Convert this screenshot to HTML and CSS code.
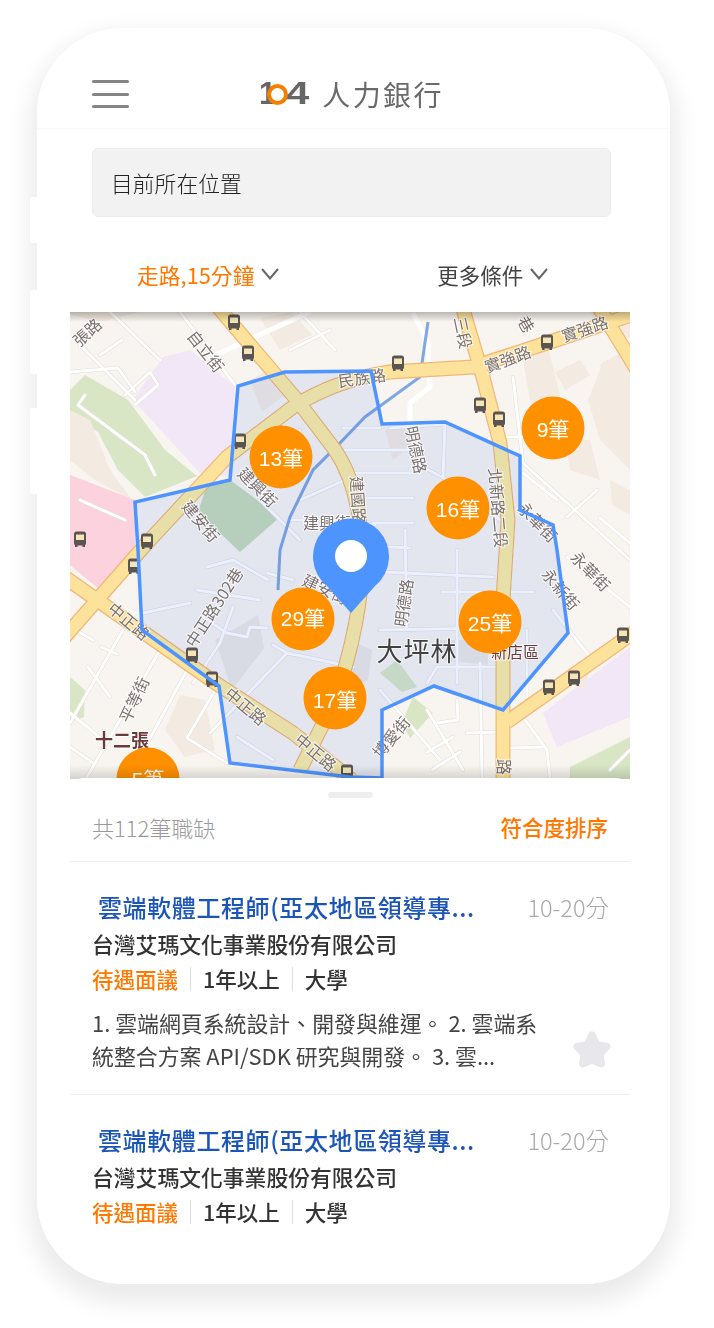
FILE: index.html
```html
<!DOCTYPE html>
<html lang="zh-Hant">
<head>
    <meta charset="UTF-8">
    <meta name="viewport" content="width=device-width, initial-scale=1.0">
    <title>104人力銀行</title>
    <link rel="stylesheet" href="styles.css">
</head>
<body>
<div class="device">
    <span class="side-btn side-btn-1"></span>
    <span class="side-btn side-btn-2"></span>
    <span class="side-btn side-btn-3"></span>

    <div class="phone">
        <header class="topbar">
            <div class="burger"><i></i><i></i><i></i></div>
            <div class="logo">
                <span class="logo-num">1</span><span class="logo-ring"></span><span class="logo-num logo-four">4</span>
                <span class="logo-name">人力銀行</span>
            </div>
        </header>

        <div class="search">目前所在位置</div>

        <div class="filters">
            <div class="filter filter-active">走路,15分鐘
                <svg class="chev" viewBox="0 0 18 12"><polyline points="1,1 9,10.5 17,1"/></svg>
            </div>
            <div class="filter">更多條件
                <svg class="chev" viewBox="0 0 18 12"><polyline points="1,1 9,10.5 17,1"/></svg>
            </div>
        </div>

        <div class="map">
            <svg class="map-svg" viewBox="70 312 560 468">
                <defs>
                    <g id="bus">
                        <rect x="-6" y="-7.500" width="12" height="14" rx="2.500" class="bus-body"/>
                        <rect x="-4" y="-4.500" width="8" height="5.500" class="bus-glass"/>
                        <rect x="-5" y="6" width="2.500" height="2" class="bus-body"/>
                        <rect x="2.500" y="6" width="2.500" height="2" class="bus-body"/>
                    </g>
                    <g id="majors">
                        <path d="M217 306 L297 400 L335 450 Q362 490 362 560 Q362 620 335 700 L300 770"/>
                        <path d="M62 640 L147 543 L227 457 L293 407 Q335 380 390 372 L473 367 L547 343 L640 312"/>
                        <path d="M462 306 L483 377 L500 443 L508 520 L503 600 L503 790"/>
                        <path d="M60 574 L143 632 L217 684 L293 733 L352 780"/>
                        <path d="M507 722 L640 628"/>
                        <path d="M598 306 L640 375"/>
                    </g>
                    <g id="minors">
                        <path d="M110 312 L160 360"/>
                        <path d="M80 345 L135 400"/>
                        <path d="M70 372 L118 368 L135 392"/>
                        <path d="M125 395 L150 372 L158 385 L135 405"/>
                        <path d="M100 355 L122 340"/>
                        <path d="M180 312 L235 385"/>
                        <path d="M300 312 L335 350"/>
                        <path d="M290 350 L330 330"/>
                        <path d="M85 395 L78 405 L145 455 L155 475"/>
                        <path d="M80 500 L125 520"/>
                        <path d="M343 428 L380 428"/>
                        <path d="M343 450 L420 450"/>
                        <path d="M340 473 L413 473"/>
                        <path d="M360 498 L413 498"/>
                        <path d="M373 523 L413 523"/>
                        <path d="M370 546 L410 548"/>
                        <path d="M445 423 L443 477"/>
                        <path d="M390 428 L445 424"/>
                        <path d="M423 467 L453 483 L500 520"/>
                        <path d="M500 437 L523 437"/>
                        <path d="M523 473 L557 500"/>
                        <path d="M597 490 L567 517"/>
                        <path d="M513 377 L523 463 L630 560"/>
                        <path d="M600 518 L630 543"/>
                        <path d="M567 557 L630 607"/>
                        <path d="M553 610 L590 657"/>
                        <path d="M527 630 L527 697"/>
                        <path d="M427 752 L453 737"/>
                        <path d="M432 770 L460 752"/>
                        <path d="M457 700 L458 720 L437 723"/>
                        <path d="M480 663 L482 777"/>
                        <path d="M467 733 L497 732"/>
                        <path d="M523 717 L547 750 L550 777"/>
                        <path d="M510 748 L543 747"/>
                        <path d="M427 710 L463 770"/>
                        <path d="M383 572 L493 577"/>
                        <path d="M457 550 L457 683"/>
                        <path d="M380 630 L493 628"/>
                        <path d="M442 592 L533 592"/>
                        <path d="M405 530 L407 630"/>
                        <path d="M427 683 L437 667 L497 667"/>
                        <path d="M267 573 L293 580"/>
                        <path d="M207 567 L233 560 L268 580"/>
                        <path d="M197 590 L260 600"/>
                        <path d="M143 613 L190 603"/>
                        <path d="M233 607 L220 643 L193 683"/>
                        <path d="M203 617 L227 633 L247 637 L250 627 L267 628"/>
                        <path d="M273 645 L287 653 L210 733"/>
                        <path d="M287 653 L353 667"/>
                        <path d="M237 737 L273 760"/>
                        <path d="M70 627 L93 640"/>
                        <path d="M101 647 L117 654"/>
                        <path d="M88 667 L110 697"/>
                        <path d="M93 607 L70 640"/>
                        <path d="M160 650 L87 777"/>
                        <path d="M123 630 L70 723"/>
                        <path d="M187 670 L133 770"/>
                        <path d="M217 687 L187 738 L227 763"/>
                        <path d="M70 713 L103 740"/>
                        <path d="M70 747 L93 763"/>
                        <path d="M290 520 L327 520 L375 525"/>
                        <path d="M380 690 L440 760"/>
                        <path d="M610 770 L630 750"/>
                        <path d="M300 430 L250 480"/>
                        <path d="M300 500 L345 480"/>
                        <path d="M260 500 L300 540"/>
                    </g>
                    <clipPath id="walk-clip">
                        <polygon points="285,372 238,386 230,480 135,502 138,550 142,630 219,686 230,763 350,777 382,778 382,710 434,686 503,710 568,633 557,550 553,525 520,510 520,456 445,422 382,424 371,371"/>
                    </clipPath>
                </defs>

                <rect class="land" x="70" y="312" width="560" height="468"/>

                <polygon class="area-pink" points="70,475 135,500 135,560 100,590 70,565"/>
                <polygon class="area-green" points="70,390 85,375 128,400 165,450 197,476 145,497 118,470 98,432 70,412"/>
                <polygon class="area-green" points="70,677 85,690 84,717 70,722"/>
                <polygon class="area-green" points="570,767 630,737 630,780 570,780"/>
                <polygon class="area-green" points="380,673 397,660 417,687 402,692"/>
                <polygon class="area-green" points="413,697 433,713 410,738 402,723"/>
                <polygon class="area-park" points="208,482 230,480 280,517 240,552 198,512"/>
                <polygon class="area-purple" points="163,357 190,350 235,387 230,477 200,473 133,400"/>
                <polygon class="area-purple" points="543,713 630,647 630,717 557,747"/>

                <g class="buildings">
                    <polygon points="555,372 580,360 590,375 565,390"/>
                    <polygon points="600,365 625,350 630,370 612,388"/>
                    <polygon points="520,345 545,335 560,395 532,410"/>
                    <polygon points="603,362 630,352 630,470 600,440 588,400"/>
                    <polygon points="565,440 590,440 600,480 570,470"/>
                    <polygon points="610,480 630,490 630,515 612,505"/>
                    <polygon points="70,410 90,420 110,470 132,500 95,480 70,460"/>
                    <polygon points="180,695 205,700 215,750 185,757 165,730"/>
                    <polygon points="100,322 60,312 140,312"/>
                    <polygon points="260,318 292,312 312,335 280,350"/>
                    <polygon points="560,680 590,665 585,690"/>
                    <polygon points="590,312 630,312 630,338 600,330"/>
                    <polygon points="250,380 268,370 285,395 262,412"/>
                    <polygon points="393,460 385,430 405,425 412,445"/>
                </g>
                <g class="buildings-gray">
                    <polygon points="350,640 372,650 368,680 345,690"/>
                    <polygon points="215,640 258,615 264,648 232,690"/>
                    <polygon points="440,640 488,640 488,665 440,660"/>
                </g>

                <use href="#minors" class="minor-casing"/>
                <use href="#minors" class="minor"/>
                <path class="minor-wide" d="M215 355 L310 312"/>
                <path class="minor-wide" d="M413 313 L428 343 L430 387 L410 403 L410 422"/>
                <path class="canal" d="M428 322 L420 377 L365 417 L340 443 L313 470 L290 517 L280 550 L278 590"/>

                <use href="#majors" class="road-casing"/>
                <use href="#majors" class="road-fill"/>

                <polygon class="walk-fill" points="285,372 238,386 230,480 135,502 138,550 142,630 219,686 230,763 350,777 382,778 382,710 434,686 503,710 568,633 557,550 553,525 520,510 520,456 445,422 382,424 371,371"/>
                <use href="#majors" class="road-inner" clip-path="url(#walk-clip)"/>

                <g class="labels">
                    <text x="88" y="338" transform="rotate(-42 88 333)">張路</text>
                    <text x="205" y="357" transform="rotate(52 205 352)">自立街</text>
                    <text x="362" y="384" transform="rotate(-8 362 378)">民族路</text>
                    <text x="462" y="338" transform="rotate(78 462 333)">三段</text>
                    <text x="508" y="365" transform="rotate(-20 508 360)">實強路</text>
                    <text x="585" y="335" transform="rotate(-18 585 330)">實強路</text>
                    <text x="525" y="330" transform="rotate(60 525 325)">巷</text>
                    <text x="257" y="493" transform="rotate(45 257 488)">建興街</text>
                    <text x="327" y="529">建興街</text>
                    <text x="200" y="527" transform="rotate(50 200 522)">建安街</text>
                    <text x="357" y="505" transform="rotate(86 357 500)">建國路</text>
                    <text x="415" y="455" transform="rotate(78 415 450)">明德路</text>
                    <text x="497" y="513" transform="rotate(85 497 508)">北新路二段</text>
                    <text x="537" y="528" transform="rotate(45 537 523)">永華街</text>
                    <text x="590" y="577" transform="rotate(45 590 572)">永華街</text>
                    <text x="560" y="595" transform="rotate(50 560 590)">永新街</text>
                    <text x="405" y="608" transform="rotate(-82 405 603)">明德路</text>
                    <text x="215" y="613" transform="rotate(-57 215 608)">中正路302巷</text>
                    <text x="128" y="627" transform="rotate(40 128 622)">中正路</text>
                    <text x="245" y="712" transform="rotate(40 245 707)">中正路</text>
                    <text x="315" y="758" transform="rotate(40 315 753)">中正路</text>
                    <text x="135" y="705" transform="rotate(-65 135 700)">平等街</text>
                    <text x="325" y="595" transform="rotate(25 325 590)">建安街</text>
                    <text x="392" y="743" transform="rotate(-50 392 738)">博愛街</text>
                    <text x="503" y="772" transform="rotate(90 503 767)">路</text>
                </g>
                <text class="place-big" x="417" y="661">大坪林</text>
                <text class="place-red" x="515" y="658">新店區</text>
                <text class="place-red place-bold" x="122" y="747">十二張</text>

                <use href="#bus" x="234" y="322"/>
                <use href="#bus" x="248" y="353"/>
                <use href="#bus" x="240" y="441"/>
                <use href="#bus" x="147" y="541"/>
                <use href="#bus" x="80" y="539"/>
                <use href="#bus" x="398" y="363"/>
                <use href="#bus" x="547" y="342"/>
                <use href="#bus" x="480" y="405"/>
                <use href="#bus" x="499" y="419"/>
                <use href="#bus" x="134" y="566"/>
                <use href="#bus" x="192" y="655"/>
                <use href="#bus" x="212" y="679"/>
                <use href="#bus" x="347" y="772"/>
                <use href="#bus" x="623" y="635"/>
                <use href="#bus" x="574" y="678"/>
                <use href="#bus" x="549" y="687"/>

                <polygon class="walk-line" points="285,372 238,386 230,480 135,502 138,550 142,630 219,686 230,763 350,777 382,778 382,710 434,686 503,710 568,633 557,550 553,525 520,510 520,456 445,422 382,424 371,371"/>

                <path class="pin" d="M351 613 L327 586 A38 38 0 1 1 375 586 Z"/>
                <circle class="pin-dot" cx="351" cy="556" r="16"/>

                <g class="clusters">
                    <circle cx="281" cy="457" r="31.500"/><text x="281" y="466">13筆</text>
                    <circle cx="553" cy="428" r="31.500"/><text x="553" y="437">9筆</text>
                    <circle cx="458" cy="508" r="31.500"/><text x="458" y="517">16筆</text>
                    <circle cx="303" cy="619" r="31.500"/><text x="303" y="626">29筆</text>
                    <circle cx="335" cy="698" r="31.500"/><text x="335" y="708">17筆</text>
                    <circle cx="490" cy="622" r="31.500"/><text x="490" y="631">25筆</text>
                    <circle cx="148" cy="779" r="31.500"/><text x="148" y="787">5筆</text>
                </g>
            </svg>
            <div class="map-fade-top"></div>
            <div class="map-fade-bottom"></div>
        </div>

        <section class="sheet">
            <div class="handle"></div>
            <div class="sheet-head">
                <span class="count">共112筆職缺</span>
                <span class="sort">符合度排序</span>
            </div>

            <article class="job">
                <div class="job-head">
                    <h3 class="job-title">雲端軟體工程師(亞太地區領導專...</h3>
                    <span class="job-time">10-20分</span>
                </div>
                <div class="job-company">台灣艾瑪文化事業股份有限公司</div>
                <div class="job-tags">
                    <span class="tag tag-salary">待遇面議</span>
                    <span class="tag">1年以上</span>
                    <span class="tag">大學</span>
                </div>
                <p class="job-desc">1. 雲端網頁系統設計、開發與維運。 2. 雲端系<br>統整合方案 API/SDK 研究與開發。 3. 雲...</p>
                <svg class="star" viewBox="0 0 40 40">
                    <path d="M20 5 L25 14.500 L35 16.500 L28 24.500 L29.500 34 L20 30 L10.500 34 L12 24.500 L5 16.500 L15 14.500 Z"/>
                </svg>
            </article>

            <article class="job">
                <div class="job-head">
                    <h3 class="job-title">雲端軟體工程師(亞太地區領導專...</h3>
                    <span class="job-time">10-20分</span>
                </div>
                <div class="job-company">台灣艾瑪文化事業股份有限公司</div>
                <div class="job-tags">
                    <span class="tag tag-salary">待遇面議</span>
                    <span class="tag">1年以上</span>
                    <span class="tag">大學</span>
                </div>
            </article>
        </section>
    </div>
</div>
</body>
</html>
```

FILE: styles.css
```css
html, body {
    margin: 0;
    background-color: #fff;
}
body {
    height: 1328px;
    overflow: hidden;
    font-family: "Noto Sans CJK TC", "Noto Sans", sans-serif;
    color: #333;
}

/* 手機外框 */
.device {
    position: relative;
    width: 633px;
    height: 1256px;
    margin: 28px 0 0 37px;
}
.side-btn {
    position: absolute;
    left: -7px;
    width: 8px;
    background-color: #fff;
    border-radius: 2px 0 0 2px;
    z-index: 1;
}
.side-btn-1 { top: 169px; height: 46px; }
.side-btn-2 { top: 262px; height: 84px; }
.side-btn-3 { top: 380px; height: 86px; }

.phone {
    position: relative;
    height: 100%;
    overflow: hidden;
    background-color: #fff;
    border-radius: 86px;
}
.device::before {
    content: "";
    position: absolute;
    inset: 0;
    border-radius: 86px;
    box-shadow: 0 12px 22px 8px rgba(0, 0, 0, 0.08);
}

/* 頂部 */
.topbar {
    display: flex;
    align-items: center;
    height: 101px;
    box-sizing: border-box;
    padding: 32px 33px 0 55px;
    border-bottom: 1px solid #fafafa;
}
.burger {
    display: flex;
    flex-direction: column;
    gap: 9.5px;
    width: 37px;
}
.burger i {
    display: block;
    height: 3px;
    border-radius: 2px;
    background-color: #858585;
}
.logo {
    display: flex;
    align-items: center;
    margin-left: 130px;
}
.logo-num {
    display: inline-block;
    font-family: "Liberation Sans", sans-serif;
    font-weight: 700;
    font-size: 31px;
    line-height: 36px;
    color: #666;
}
.logo-four {
    width: 16px;
    transform: scaleX(1.35);
    transform-origin: left center;
}
.logo-ring {
    width: 13px;
    height: 13px;
    margin: 0 -2px 0 -9px;
    border: 4.500px solid #f77f00;
    border-radius: 50%;
    z-index: 1;
}
.logo-name {
    margin-left: 20px;
    font-size: 28px;
    line-height: 36px;
    letter-spacing: 2.400px;
    color: #6a6a6a;
}

/* 搜尋框 */
.search {
    height: 67px;
    margin: 19px 59px 0 55px;
    padding-left: 18px;
    border: 1px solid #ececec;
    border-radius: 6px;
    background-color: #f2f2f2;
    font-size: 21.800px;
    font-weight: 300;
    line-height: 68px;
    color: #222;
}

.filters {
    display: grid;
    grid-template-columns: 1fr 1fr;
    height: 75px;
    margin-left: 29px;
    margin-right: 35px;
    padding-top: 20px;
}
.filter {
    display: flex;
    align-items: center;
    justify-content: center;
    gap: 7px;
    font-size: 21.500px;
    color: #444;
}
.filter-active {
    font-size: 21.800px;
    color: #ff7800;
}
.chev {
    width: 18px;
    height: 12px;
    margin-top: -1px;
}
.chev polyline {
    fill: none;
    stroke: #666;
    stroke-width: 2;
}

/* 地圖 */
.map {
    position: relative;
    height: 467px;
    margin: 0 40px 0 33px;
    overflow: hidden;
}
.map-svg {
    display: block;
    width: 560px;
    height: 468px;
}
.land { fill: #f8f4ef; }
.area-pink { fill: #fbd2de; }
.area-green { fill: #d8e6c6; }
.area-park { fill: #c6dcbc; }
.area-purple { fill: #f1e7f6; }
.buildings polygon { fill: #f3ebe2; }
.buildings-gray polygon { fill: #ece8e4; }
.minor-casing, .minor {
    fill: none;
    stroke-linecap: round;
    stroke-linejoin: round;
}
.minor-casing {
    stroke: #e2ded8;
    stroke-width: 4;
}
.minor {
    stroke: #fff;
    stroke-width: 3;
}
.minor-wide {
    fill: none;
    stroke: #fff;
    stroke-width: 5;
}
.canal {
    fill: none;
    stroke: #7fa8e2;
    stroke-width: 3;
}
.road-casing, .road-fill, .road-inner {
    fill: none;
    stroke-linejoin: round;
}
.road-casing {
    stroke: #f0b878;
    stroke-width: 15;
}
.road-fill {
    stroke: #fde29c;
    stroke-width: 12.500;
}
.road-inner {
    stroke: #e8dfa8;
    stroke-width: 12.500;
}
.walk-fill {
    fill: #eaf0ff;
    mix-blend-mode: multiply;
}
.walk-line {
    fill: none;
    stroke: #4d94ff;
    stroke-width: 3.500;
    stroke-linejoin: miter;
}
.labels text {
    font-size: 16px;
    text-anchor: middle;
    fill: #7b7070;
    stroke: rgba(255, 255, 255, 0.8);
    stroke-width: 2;
    paint-order: stroke;
}
.place-big {
    font-size: 26px;
    letter-spacing: 1px;
    text-anchor: middle;
    fill: #404040;
    stroke: rgba(255, 255, 255, 0.7);
    stroke-width: 2;
    paint-order: stroke;
}
.place-red {
    font-size: 16px;
    text-anchor: middle;
    fill: #6b3b3b;
    stroke: rgba(255, 255, 255, 0.8);
    stroke-width: 2;
    paint-order: stroke;
}
.place-bold {
    font-size: 18px;
    font-weight: 700;
}
.bus-body { fill: #5b5552; }
.bus-glass { fill: #f5e6b8; }
.pin { fill: #4d94ff; }
.pin-dot { fill: #fff; }
.clusters circle { fill: #ff9000; }
.clusters text {
    font-family: "Liberation Sans", "Noto Sans CJK TC", sans-serif;
    font-size: 21px;
    text-anchor: middle;
    fill: #fff;
}
.map-fade-top {
    position: absolute;
    top: 0;
    left: 0;
    right: 0;
    height: 10px;
    background: linear-gradient(rgba(0, 0, 0, 0.25), rgba(0, 0, 0, 0));
}
.map-fade-bottom {
    position: absolute;
    bottom: 0;
    left: 0;
    right: 0;
    height: 14px;
    background: linear-gradient(rgba(0, 0, 0, 0), rgba(0, 0, 0, 0.14));
}

/* 職缺列表 */
.sheet {
    position: relative;
    margin: -1px 40px 0 33px;
    background-color: #fff;
    border-radius: 14px 14px 0 0;
}
.handle {
    position: absolute;
    top: 14px;
    left: 258px;
    width: 45px;
    height: 6px;
    border-radius: 3px;
    background-color: #eee;
}
.sheet-head {
    display: flex;
    align-items: center;
    justify-content: space-between;
    height: 84px;
    padding: 14px 22px 0;
    box-sizing: border-box;
    border-bottom: 1px solid #eee;
}
.count {
    font-size: 22px;
    font-weight: 300;
    color: #999;
}
.sort {
    font-size: 21.500px;
    font-weight: 500;
    color: #ff7800;
}
.job {
    position: relative;
    padding: 27px 21px 22px 22px;
    border-bottom: 1px solid #eee;
}
.job:last-child {
    border-bottom: none;
}
.job-head {
    display: flex;
    justify-content: space-between;
    align-items: center;
    height: 36px;
}
.job-title {
    margin: 0 0 0 6px;
    font-size: 24px;
    font-weight: 500;
    letter-spacing: 0.600px;
    line-height: 36px;
    white-space: nowrap;
    color: #1b55b8;
}
.job-time {
    font-size: 23.500px;
    font-weight: 300;
    color: #aaa;
}
.job-company {
    font-size: 21.800px;
    font-weight: 500;
    line-height: 37px;
    color: #333;
}
.job-tags {
    display: flex;
    align-items: center;
    height: 33px;
    font-size: 21.500px;
    font-weight: 500;
}
.tag + .tag {
    margin-left: 12px;
    padding-left: 12px;
    border-left: 1px solid #ddd;
    line-height: 24px;
}
.tag-salary {
    color: #ff7800;
}
.job-desc {
    margin: 11px 0 0;
    font-size: 21.900px;
    line-height: 33px;
    color: #444;
}
.star {
    position: absolute;
    right: 18px;
    bottom: 24px;
    width: 40px;
    height: 40px;
}
.star path {
    fill: #e8e8ec;
    stroke: #e8e8ec;
    stroke-width: 7;
    stroke-linejoin: round;
}
```
